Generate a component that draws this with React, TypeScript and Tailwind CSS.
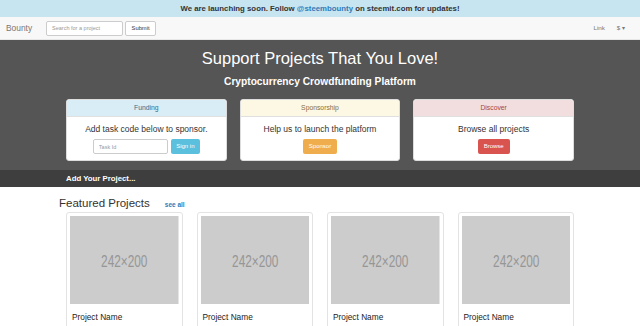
import type { ReactNode } from "react";

const font = { fontFamily: '"Liberation Sans", Arial, sans-serif' };

function Placeholder() {
  return (
    <svg viewBox="0 0 110 88" className="block w-full h-[88px]" preserveAspectRatio="none">
      <rect width="110" height="88" fill="#cccccc" />
      <text
        x="55"
        y="51"
        textAnchor="middle"
        fontSize="17"
        fill="#969696"
        textLength="47"
        lengthAdjust="spacingAndGlyphs"
        fontFamily="'Liberation Sans', Arial, sans-serif"
      >
        242×200
      </text>
    </svg>
  );
}

type Panel = {
  title: string;
  head: string;
  text: string;
  children: ReactNode;
};

function ActionCard({ title, head, text, children }: Panel) {
  return (
    <div className="bg-white rounded-[3px] overflow-hidden border border-[#dddddd]">
      <div className={`h-[17px] flex items-center justify-center text-[6.8px] border-b border-[#e0e0e0] ${head}`}>
        {title}
      </div>
      <div className="flex flex-col items-center pt-[6px] pb-[6px]">
        <p className="text-[8.5px] leading-[12px] text-[#333]">{text}</p>
        <div className="mt-[4px] flex items-center gap-[3px]">{children}</div>
      </div>
    </div>
  );
}

const projects = [1, 2, 3, 4];

export default function App() {
  return (
    <div className="w-[640px] h-[326px] overflow-hidden bg-white" style={font}>
      {/* alert */}
      <div className="h-[17px] bg-[#c6e5f1] flex items-center justify-center text-[7.8px] font-bold text-[#333]">
        We are launching soon. Follow&nbsp;<span className="text-[#337ab7]">@steembounty</span>&nbsp;on steemit.com for updates!
      </div>

      {/* navbar */}
      <nav className="h-[23px] bg-[#f8f8f8] border-b border-[#e7e7e7] flex items-center px-[6px]">
        <span className="text-[8.4px] text-[#777]">Bounty</span>
        <input
          placeholder="Search for a project"
          className="ml-[14px] w-[77px] h-[15px] bg-white border border-[#ccc] rounded-[2px] px-[5px] text-[5.5px] outline-none placeholder:text-[#999]"
        />
        <button className="ml-[2px] w-[31px] h-[15px] bg-white border border-[#ccc] rounded-[2px] text-[5.8px] text-[#333]">
          Submit
        </button>
        <div className="ml-auto flex items-center text-[6.2px] text-[#777]">
          <span>Link</span>
          <span className="ml-[12px] mr-[9px]">$ ▾</span>
        </div>
      </nav>

      {/* hero */}
      <section className="bg-[#555555] pt-[8px] pb-[9px]">
        <h1 className="text-center text-white text-[16.5px] leading-[20px]">Support Projects That You Love!</h1>
        <p className="mt-[8px] text-center text-white text-[10.2px] leading-[12px] font-bold">
          Cryptocurrency Crowdfunding Platform
        </p>
        <div className="mt-[11px] w-[508px] mx-auto grid grid-cols-3 gap-[13px]">
          <ActionCard title="Funding" head="bg-[#d9edf7] text-[#31708f]" text="Add task code below to sponsor.">
            <input
              placeholder="Task Id"
              className="w-[75px] h-[15px] border border-[#ccc] rounded-[2px] px-[5px] text-[5.5px] outline-none placeholder:text-[#999]"
            />
            <button className="w-[29px] h-[15px] rounded-[2px] bg-[#5bc0de] text-white text-[6px]">Sign in</button>
          </ActionCard>
          <ActionCard title="Sponsorship" head="bg-[#fcf8e3] text-[#8a6d3b]" text="Help us to launch the platform">
            <button className="w-[34px] h-[15px] rounded-[2px] bg-[#f0ad4e] text-white text-[6px]">Sponsor</button>
          </ActionCard>
          <ActionCard title="Discover" head="bg-[#f2dede] text-[#a94442]" text="Browse all projects">
            <button className="w-[32px] h-[15px] rounded-[2px] bg-[#d9534f] text-white text-[6px]">Browse</button>
          </ActionCard>
        </div>
      </section>

      {/* band */}
      <div className="h-[17px] bg-[#3e3e3e] flex items-center">
        <div className="w-[508px] mx-auto text-white font-bold text-[7.8px]">Add Your Project...</div>
      </div>

      {/* featured */}
      <section className="w-[508px] mx-auto">
        <div className="mt-[9px] -ml-[7px] flex items-baseline">
          <h2 className="text-[11.5px] leading-[14px] text-[#333]">Featured Projects</h2>
          <a className="ml-[15px] text-[6.5px] font-bold text-[#337ab7]">see all</a>
        </div>
        <div className="mt-[2px] grid grid-cols-4 gap-[14px]">
          {projects.map((p) => (
            <div key={p} className="border border-[#e3e3e3] rounded-[3px] p-[3px] h-[140px]">
              <Placeholder />
              <p className="mt-[8px] ml-[2px] text-[8.3px] leading-[10px] text-[#222]">Project Name</p>
            </div>
          ))}
        </div>
      </section>
    </div>
  );
}
